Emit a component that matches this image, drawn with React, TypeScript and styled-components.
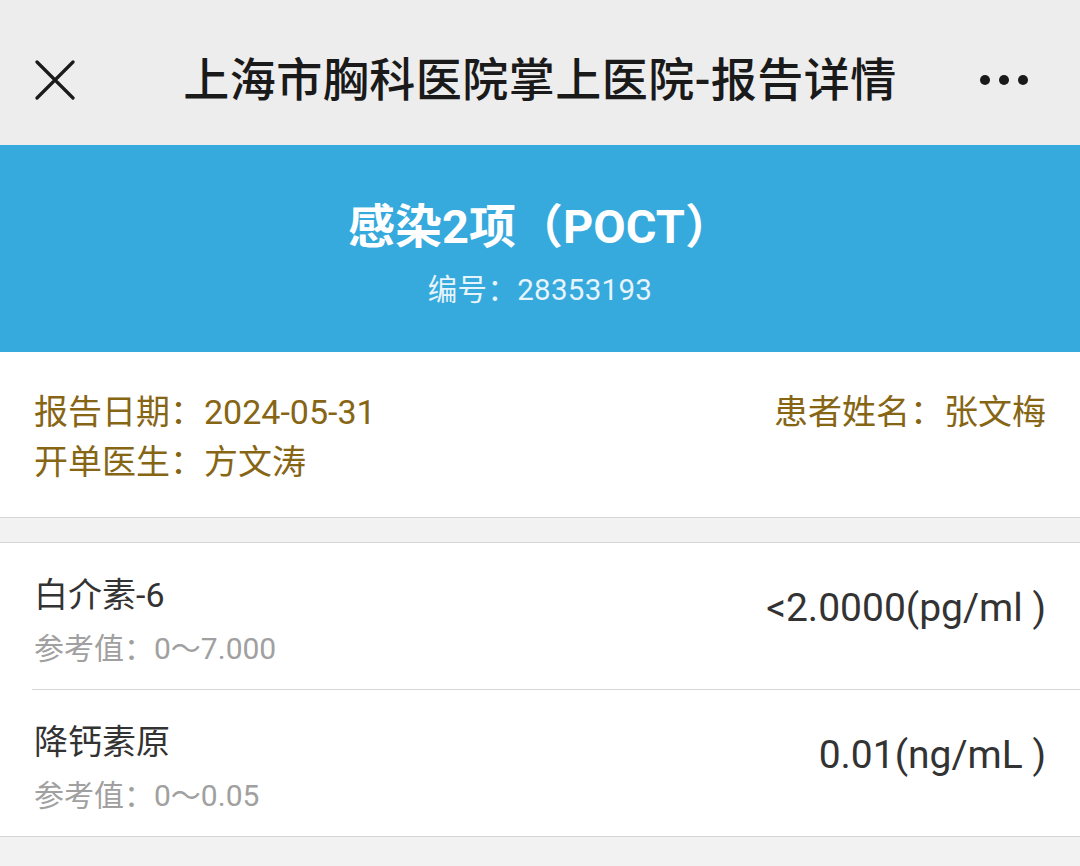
import React from "react";
import styled, { createGlobalStyle } from "styled-components";

const GlobalStyle = createGlobalStyle`
  html, body { margin: 0; padding: 0; background: #f2f2f2; }
  body { font-family: Roboto, "Noto Sans CJK SC", sans-serif; }
  * { box-sizing: border-box; }
`;

const Page = styled.div`
  width: 1080px;
  min-height: 866px;
  background: #f2f2f2;
  display: flex;
  flex-direction: column;
`;

const TopBar = styled.header`
  height: 145px;
  padding-top: 15px;
  background: #ededed;
  display: grid;
  grid-template-columns: 110px 1fr 110px;
  align-items: center;
`;

const IconButton = styled.div<{ $align: "start" | "end" }>`
  display: flex;
  justify-content: ${(p) => (p.$align === "start" ? "flex-start" : "flex-end")};
  padding: ${(p) => (p.$align === "start" ? "0 0 0 35px" : "0 51px 0 0")};
  color: #1a1a1a;
`;

const TopTitle = styled.h1`
  margin: 0;
  text-align: center;
  font-size: 46px;
  font-weight: 500;
  color: #1a1a1a;
  font-family: Roboto, "Noto Sans CJK SC", sans-serif;
  letter-spacing: 0.5px;
  line-height: 1;
`;

const Banner = styled.section`
  height: 207px;
  background: #36a9dd;
  display: flex;
  flex-direction: column;
  align-items: center;
  color: #fff;
  padding-top: 55px;
`;

const BannerTitle = styled.div`
  font-size: 47px;
  font-weight: 700;
  line-height: 54px;
`;

const BannerSub = styled.div`
  margin-top: 16px;
  font-size: 29.5px;
  line-height: 40px;
  color: #e6f4fb;
  letter-spacing: 0.3px;
`;

const InfoCard = styled.section`
  background: #fff;
  padding: 35px 34px 30px 34px;
  border-bottom: 1px solid #d6d6d6;
  display: grid;
  grid-template-columns: 1fr auto;
  grid-auto-rows: 50px;
  align-items: center;
`;

const InfoText = styled.div`
  font-size: 34px;
  color: #866515;
  line-height: 50px;
`;

const Gap = styled.div`
  height: 24px;
  background: #f2f2f2;
`;

const List = styled.section`
  background: #fff;
  border-top: 1px solid #d6d6d6;
  border-bottom: 1px solid #d6d6d6;
`;

const Item = styled.div<{ $last?: boolean }>`
  margin-left: 32px;
  padding-right: 34px;
  height: ${(p) => (p.$last ? "146px" : "147px")};
  display: flex;
  justify-content: space-between;
  align-items: flex-start;
  border-bottom: ${(p) => (p.$last ? "none" : "1px solid #d6d6d6")};
`;

const ItemLeft = styled.div`
  display: flex;
  flex-direction: column;
  padding-top: 30px;
  padding-left: 2px;
`;

const ItemName = styled.div`
  font-size: 34px;
  line-height: 44px;
  color: #333;
`;

const ItemRef = styled.div`
  margin-top: 12px;
  font-size: 30px;
  line-height: 40px;
  color: #a0a0a0;
`;

const ItemValue = styled.div`
  padding-top: 43px;
  font-size: 39px;
  line-height: 44px;
  color: #333;
`;

const CloseIcon = () => (
  <svg width="40" height="40" viewBox="0 0 40 40">
    <path d="M2 2 L38 38 M38 2 L2 38" stroke="#1a1a1a" strokeWidth="3.2" strokeLinecap="round" />
  </svg>
);

const MoreIcon = () => (
  <svg width="50" height="12" viewBox="0 0 50 12">
    <circle cx="6" cy="6" r="5" fill="#1a1a1a" />
    <circle cx="25" cy="6" r="5" fill="#1a1a1a" />
    <circle cx="44" cy="6" r="5" fill="#1a1a1a" />
  </svg>
);

const items = [
  { name: "白介素-6", ref: "参考值：0～7.000", value: "<2.0000(pg/ml )" },
  { name: "降钙素原", ref: "参考值：0～0.05", value: "0.01(ng/mL )" },
];

export default function App() {
  return (
    <>
      <GlobalStyle />
      <Page>
        <TopBar>
          <IconButton $align="start">
            <CloseIcon />
          </IconButton>
          <TopTitle>上海市胸科医院掌上医院-报告详情</TopTitle>
          <IconButton $align="end">
            <MoreIcon />
          </IconButton>
        </TopBar>
        <Banner>
          <BannerTitle>感染2项（POCT）</BannerTitle>
          <BannerSub>编号：28353193</BannerSub>
        </Banner>
        <InfoCard>
          <InfoText>报告日期：2024-05-31</InfoText>
          <InfoText>患者姓名：张文梅</InfoText>
          <InfoText>开单医生：方文涛</InfoText>
        </InfoCard>
        <Gap />
        <List>
          {items.map((it, i) => (
            <Item key={it.name} $last={i === items.length - 1}>
              <ItemLeft>
                <ItemName>{it.name}</ItemName>
                <ItemRef>{it.ref}</ItemRef>
              </ItemLeft>
              <ItemValue>{it.value}</ItemValue>
            </Item>
          ))}
        </List>
      </Page>
    </>
  );
}
